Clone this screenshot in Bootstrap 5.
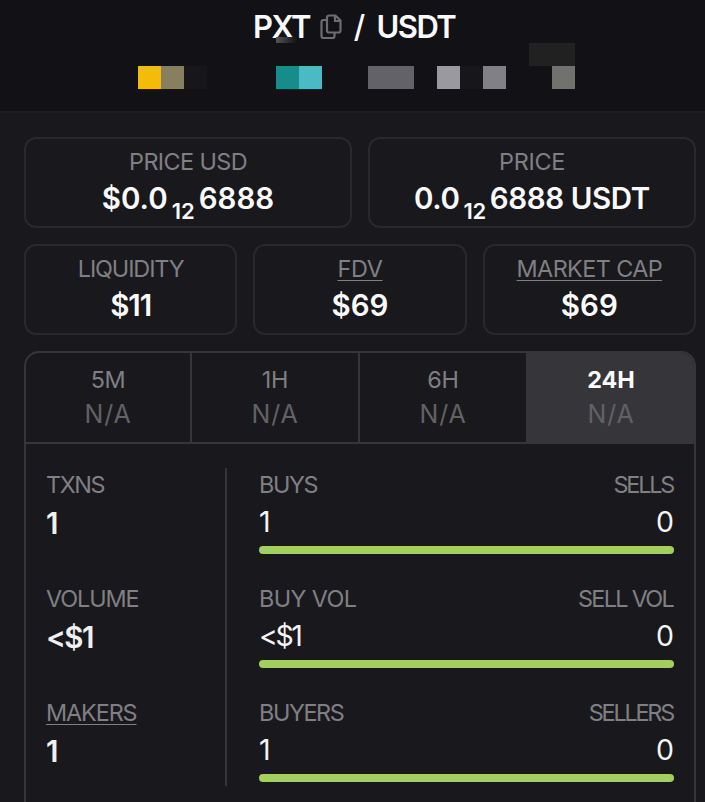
<!DOCTYPE html>
<html lang="en" data-bs-theme="dark">
<head>
<meta charset="utf-8">
<meta name="viewport" content="width=device-width, initial-scale=1">
<title>PXT / USDT</title>
<link href="https://cdn.jsdelivr.net/npm/bootstrap@5.3.0/dist/css/bootstrap.min.css" rel="stylesheet">
<style>
body{background:#19181c;color:#fafafa;font-family:Inter,"Open Sans",sans-serif;height:802px;overflow:hidden}
.pair-head{height:113px;background:#121116;border-bottom:2px solid #1e1d22}
.pair-name{height:43px;padding:11px 0 0 253px;font-size:31px;font-weight:600;line-height:32px}
.pair-name span{letter-spacing:-1.6px}
.pair-name svg{width:22px;height:26px;margin:0 12px 0 10px}
.pair-name .slash{margin-right:13px;font-weight:500}
.mosaic{display:grid;grid-template-columns:repeat(30,23px);grid-template-rows:6px 23px 23px;margin-top:-6px}
.m-smear{grid-area:1/13;background:linear-gradient(100deg,#55555a,#121116 90%)}
.m0{grid-area:2/24/3/26;background:#212122}
.m1{grid-area:3/7;background:#f3bc0b}
.m2{grid-area:3/8;background:#887f5f}
.m3{grid-area:3/9;background:#17161a}
.m4{grid-area:3/13;background:#178c8a}
.m5{grid-area:3/14;background:#4cbac5}
.m6{grid-area:3/17/4/19;background:#636268}
.m7{grid-area:3/20;background:#9a999f}
.m8{grid-area:3/21;background:#17161a}
.m9{grid-area:3/22;background:#818086}
.m10{grid-area:3/25;background:#71726e}
.main-area{padding:24px 9px 0 24px}
.stat-box{border:2px solid #29282d;border-radius:12px;height:91px;padding-top:5px;flex:1 1 0}
.lbl{font-size:23.4px;font-weight:400;line-height:35px;color:#807f83;letter-spacing:-.3px;white-space:nowrap}
.ul{text-decoration:underline;text-decoration-thickness:1px;text-underline-offset:3px}
.val{font-size:29.5px;font-weight:600;line-height:38px;white-space:nowrap}
.lowered{font-size:22px;position:relative;top:10px;line-height:1}
.panel{border:2px solid #36353a;border-bottom:0;border-radius:15px 15px 0 0;height:460px;overflow:hidden}
.period{height:91px;padding-top:9px;border-right:2px solid #36353a;border-bottom:2px solid #36353a}
.periods{display:grid;grid-template-columns:166px 168px 168px 1fr}
.period.on{background:#36353a;border-right:0}
.period.on .lbl{color:#fafafa;font-weight:700;letter-spacing:0}
.na{font-size:25px;font-weight:400;line-height:34px;letter-spacing:.8px;color:#626164}
.totals{width:201px;height:318px;border-right:2px solid #36353a;padding-left:20px}
.entry{height:114px}
.entry .lbl{line-height:33px}
.entry .val{line-height:45px;color:#f0f0f0;letter-spacing:-1.5px}
.num{font-size:28.5px;font-weight:400;line-height:42px;color:#f4f4f4}
.num span:first-child{letter-spacing:-2.4px}
.meter{height:8px;border-radius:4px;background:#a3ce60;margin-top:3px}
.splits{padding:0 20px 0 32px}
.ls-a{letter-spacing:-.6px}
.ls-b{letter-spacing:-1.1px}
.ls-c{letter-spacing:-1.4px}
.ls-d{letter-spacing:-1.7px;margin-right:1px}
.ls-e{letter-spacing:-2.2px;margin-right:1px}
</style>
</head>
<body>
<header class="pair-head">
  <div class="pair-name d-flex align-items-center"><span>PXT</span><svg viewBox="0 0 22 26" fill="none" stroke="#6d6c70" stroke-width="2.2"><path d="M7 6H3.500Q1.500 6 1.500 8V22Q1.500 24 3.500 24H12.500Q14.500 24 14.500 22V19.500M9.500 1.500H15.500L20.500 6.500V16.500Q20.500 18.500 18.500 18.500H9Q7 18.500 7 16.500V3.500Q7 1.500 9.500 1.500ZM15 2V7H20"/></svg><span class="slash">/</span><span>USDT</span></div>
  <div class="mosaic">
    <i class="m-smear"></i><i class="m0"></i><i class="m1"></i><i class="m2"></i><i class="m3"></i><i class="m4"></i><i class="m5"></i><i class="m6"></i><i class="m7"></i><i class="m8"></i><i class="m9"></i><i class="m10"></i>
  </div>
</header>
<main class="main-area d-flex flex-column gap-3">
  <div class="d-flex gap-3 text-center">
    <div class="stat-box"><div class="lbl ls-a">PRICE USD</div><div class="val"><span>$0.0</span><span class="lowered mx-1">12</span><span>6888</span></div></div>
    <div class="stat-box"><div class="lbl">PRICE</div><div class="val" style="letter-spacing:-.4px"><span>0.0</span><span class="lowered mx-1">12</span><span>6888 USDT</span></div></div>
  </div>
  <div class="d-flex gap-3 text-center">
    <div class="stat-box"><div class="lbl ls-b">LIQUIDITY</div><div class="val ls-b">$11</div></div>
    <div class="stat-box"><div class="lbl"><span class="ul">FDV</span></div><div class="val">$69</div></div>
    <div class="stat-box"><div class="lbl ls-a"><span class="ul">MARKET CAP</span></div><div class="val">$69</div></div>
  </div>
  <section class="panel">
    <div class="periods text-center">
      <div class="period"><div class="lbl">5M</div><div class="na">N/A</div></div>
      <div class="period"><div class="lbl">1H</div><div class="na">N/A</div></div>
      <div class="period"><div class="lbl">6H</div><div class="na">N/A</div></div>
      <div class="period on"><div class="lbl">24H</div><div class="na">N/A</div></div>
    </div>
    <div class="d-flex pt-4">
      <div class="totals">
        <div class="entry"><div class="lbl ls-c">TXNS</div><div class="val">1</div></div>
        <div class="entry"><div class="lbl ls-b">VOLUME</div><div class="val">&lt;$1</div></div>
        <div class="entry"><div class="lbl ls-b"><span class="ul">MAKERS</span></div><div class="val">1</div></div>
      </div>
      <div class="splits flex-grow-1">
        <div class="entry"><div class="d-flex justify-content-between lbl"><span class="ls-c">BUYS</span><span class="ls-e">SELLS</span></div><div class="d-flex justify-content-between num"><span>1</span><span>0</span></div><div class="meter"></div></div>
        <div class="entry"><div class="d-flex justify-content-between lbl"><span class="ls-a">BUY VOL</span><span class="ls-d">SELL VOL</span></div><div class="d-flex justify-content-between num"><span>&lt;$1</span><span>0</span></div><div class="meter"></div></div>
        <div class="entry"><div class="d-flex justify-content-between lbl"><span class="ls-c">BUYERS</span><span class="ls-e">SELLERS</span></div><div class="d-flex justify-content-between num"><span>1</span><span>0</span></div><div class="meter"></div></div>
      </div>
    </div>
  </section>
</main>
<script src="https://cdn.jsdelivr.net/npm/bootstrap@5.3.0/dist/js/bootstrap.bundle.min.js"></script>
</body>
</html>
